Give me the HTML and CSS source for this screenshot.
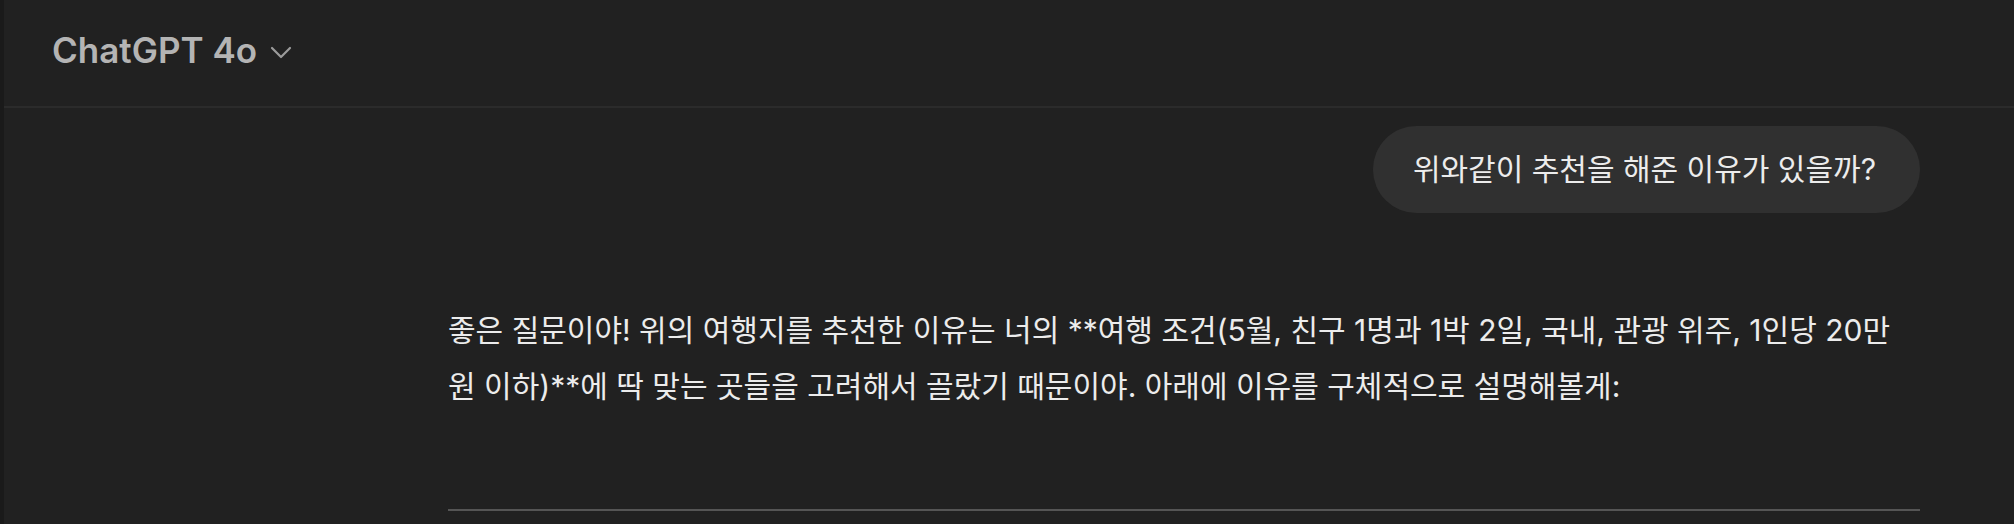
FILE: index.html
```html
<!DOCTYPE html>
<html lang="ko">
<head>
    <meta charset="UTF-8">
    <meta name="viewport" content="width=device-width, initial-scale=1.0">
    <title>ChatGPT</title>
    <link rel="stylesheet" href="styles.css">
</head>
<body>
    <div class="app">
        <div class="sidebar-edge"></div>
        <main class="main">
            <header class="topbar">
                <button class="model-switch">
                    <span>ChatGPT 4o</span>
                    <svg class="chevron" width="22" height="13" viewBox="0 0 22 13" fill="none">
                        <path d="M2 2 L11 11 L20 2" stroke="currentColor" stroke-width="2.2" stroke-linecap="round" stroke-linejoin="round"/>
                    </svg>
                </button>
            </header>

            <div class="thread">
                <div class="turn user">
                    <div class="bubble">위와같이 추천을 해준 이유가 있을까?</div>
                </div>

                <div class="turn assistant">
                    <p>좋은 질문이야! 위의 여행지를 추천한 이유는 너의 **여행 조건(5월, 친구 1명과 1박 2일, 국내, 관광 위주, 1인당 20만 원 이하)**에 딱 맞는 곳들을 고려해서 골랐기 때문이야. 아래에 이유를 구체적으로 설명해볼게:</p>
                    <hr>
                </div>
            </div>
        </main>
    </div>
</body>
</html>
```

FILE: styles.css
```css
html, body {
    margin: 0;
    padding: 0;
    height: 100%;
    overflow: hidden;
}

body {
    background-color: #212121;
    color: #ececec;
    font-family: Inter, "Noto Sans CJK KR", sans-serif;
}

.app {
    display: flex;
    height: 100vh;
}

.sidebar-edge {
    width: 4px;
    flex-shrink: 0;
    background-color: #1a1a1a;
}

.main {
    flex: 1;
    display: flex;
    flex-direction: column;
}

.topbar {
    height: 106px;
    border-bottom: 2px solid #2b2b2b;
    display: flex;
    align-items: center;
    padding-left: 39px;
}

.model-switch {
    display: flex;
    align-items: center;
    gap: 13px;
    background: none;
    border: none;
    padding: 0 9px;
    margin-top: -6px;
    color: #b4b4b4;
    font-family: Inter, sans-serif;
    font-size: 35px;
    font-weight: 600;
}

.chevron {
    color: #9b9b9b;
    margin-top: 4px;
}

.thread {
    width: 1472px;
    margin-left: 444px;
}

.turn.user {
    display: flex;
    justify-content: flex-end;
    padding-top: 18px;
}

.bubble {
    background-color: #303030;
    border-radius: 44px;
    padding: 23px 44px 23px 40px;
    font-size: 30px;
    line-height: 41px;
}

.turn.assistant {
    padding-top: 89px;
}

.turn.assistant p {
    margin: 0;
    font-size: 30px;
    line-height: 56px;
}

.turn.assistant hr {
    border: none;
    height: 2px;
    background-color: #555555;
    margin: 95px 0 0;
}
```
